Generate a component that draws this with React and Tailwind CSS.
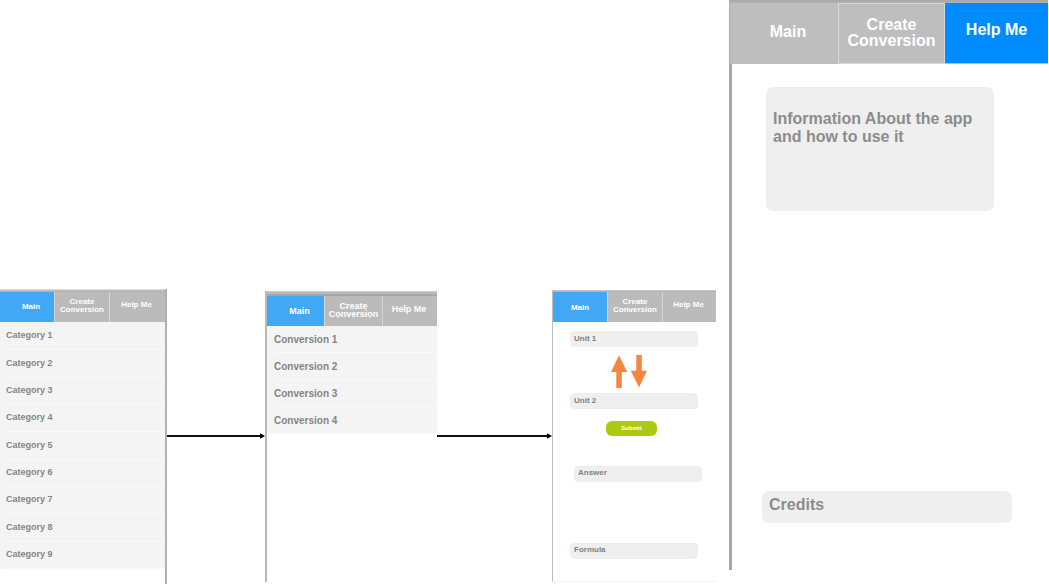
import React from "react";

const categories = [1, 2, 3, 4, 5, 6, 7, 8, 9].map((n) => `Category ${n}`);
const conversions = [1, 2, 3, 4].map((n) => `Conversion ${n}`);

function Tabs({ className, mainClass = "pl-2" }) {
  return (
    <nav className={`grid h-[30px] bg-[#bbbbbb] font-bold text-white ${className}`}>
      <button className={`border-r border-[#d6d6d6] bg-[#40a8f5] bg-clip-padding ${mainClass}`}>
        Main
      </button>
      <button className="border-r border-[#d6d6d6] pb-0.5">
        Create
        <br />
        Conversion
      </button>
      <button className="pr-0.5 pb-1">Help Me</button>
    </nav>
  );
}

function List({ items, className }) {
  return (
    <ul className={`grid auto-rows-fr bg-[#f4f4f4] font-bold text-[#848484] ${className}`}>
      {items.map((item) => (
        <li key={item} className="flex items-center border-b border-[#fafafa]">
          <a href="#">{item}</a>
        </li>
      ))}
    </ul>
  );
}

function Connector() {
  return (
    <div className="mt-[433px] flex items-center" aria-hidden="true">
      <div className="h-[2px] flex-1 bg-[#111111]" />
      <svg className="h-[6px] w-[5px]" viewBox="0 0 5 6">
        <path d="M0 0.3 L5 3 L0 5.7 Z" fill="#000" />
      </svg>
    </div>
  );
}

const fieldClass =
  "block h-4 w-full rounded-[4px] bg-[#efefef] px-1 pb-0.5 text-[8px] leading-[14px] font-bold text-[#808080] placeholder:text-[#808080] placeholder:opacity-100 outline-none";

function ConverterForm() {
  return (
    <form className="pt-[9px] pr-[18px] pb-[22px] pl-[17px]" onSubmit={(e) => e.preventDefault()}>
      <input aria-label="Unit 1" placeholder="Unit 1" className={fieldClass} />
      <button type="button" aria-label="Swap units" className="mt-2 ml-[41px] block">
        <svg className="h-[33px] w-9" viewBox="0 0 36 33" fill="#f6863f">
          <path d="M8 0.3 L16.2 17 H10.8 V33 H5.3 V17 H0 Z" />
          <path d="M25.3 0 H30.8 V15.8 H36 L28 32.6 L19.8 15.8 H25.3 Z" />
        </svg>
      </button>
      <input aria-label="Unit 2" placeholder="Unit 2" className={`mt-[5px] ${fieldClass}`} />
      <button
        type="submit"
        className="mt-3 ml-9 flex h-[15px] w-[51px] items-center justify-center rounded-[6px] bg-[#acca12] text-[6px] font-bold text-white"
      >
        Submit
      </button>
      <div className="mt-[30px] -mr-1 pl-1">
        <output className={fieldClass}>Answer</output>
      </div>
      <output className={`mt-[61px] ${fieldClass}`}>Formula</output>
    </form>
  );
}

export default function App() {
  return (
    <main className="grid min-h-screen grid-cols-[167fr_98fr_172fr_115fr_164fr_13fr_319fr_1fr] items-start bg-white font-['Liberation_Sans',Arial,sans-serif]">
      <section className="mt-[289px] border-r-[2px] border-[#b0b0b0]">
        <div className="h-[3px] bg-linear-to-b from-[#dedede] to-[#a8a8a8]" />
        <Tabs className="grid-cols-[55fr_55fr_55fr] text-[8px] leading-[8px]" />
        <List items={categories} className="h-[247px] pt-px pl-[6px] text-[9px]" />
        <div className="h-[15px]" />
      </section>

      <Connector />

      <section className="mt-[291px] border-l-[2px] border-[#b8b8b8]">
        <div className="h-[5px] bg-linear-to-b from-[#cccccc] to-[#a0a0a0]" />
        <Tabs className="grid-cols-[58fr_58fr_54fr] text-[9px] leading-[8px]" />
        <List items={conversions} className="h-[108px] pl-[7px] text-[10px]" />
        <div className="h-[148px]" />
      </section>

      <Connector />

      <section className="mt-[290px] border-b border-l border-b-[#f4f4f4] border-l-[#bdbdbd]">
        <div className="h-[2px] bg-linear-to-b from-[#d0d0d0] to-[#a8a8a8]" />
        <Tabs className="grid-cols-[55fr_55fr_53fr] text-[8px] leading-[8px]" mainClass="pt-0.5" />
        <ConverterForm />
      </section>

      <div />

      <section>
        <div className="h-[3px] bg-linear-to-b from-[#a8a8a8] to-[#b2b2b2]" />
        <nav className="grid h-[61px] grid-cols-[108fr_107fr_103fr] border-l border-[#b0b0b0] bg-[#bebebe] text-[16px] leading-4 font-bold text-white">
          <button className="pb-1 pl-2">Main</button>
          <button className="border border-[#d8d8d8] pb-0.5">
            Create
            <br />
            Conversion
          </button>
          <button className="mb-px bg-[#008cff] pb-[7px]">Help Me</button>
        </nav>
        <div className="border-l-[3px] border-[#a6a6a6] pt-[23px] pr-9 pb-[47px] pl-[30px] text-[16px] leading-[18px] font-bold text-[#8c8c8c]">
          <div className="mr-[18px] ml-1 h-[124px] rounded-[7px] bg-[#efefef] px-[7px] pt-[23px]">
            Information About the app
            <br />
            and how to use it
          </div>
          <div className="mt-[280px] h-8 rounded-[7px] bg-[#efefef] px-[7px] pt-[5px]">Credits</div>
        </div>
      </section>
    </main>
  );
}
